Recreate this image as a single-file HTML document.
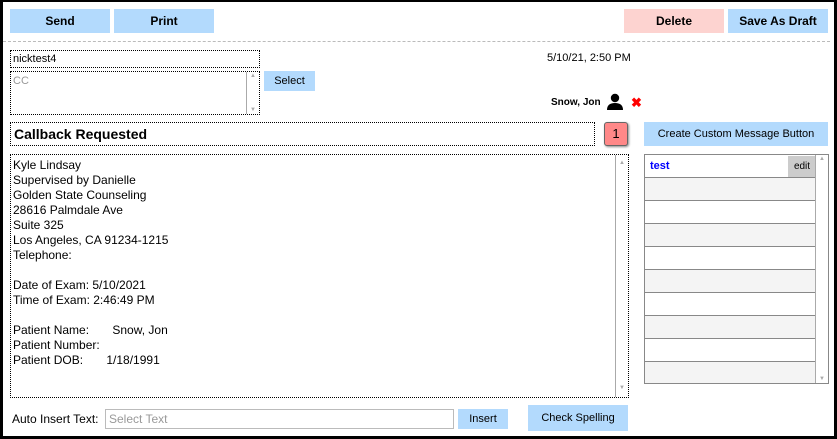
<!DOCTYPE html><html><head><style>
*{margin:0;padding:0;box-sizing:border-box}
body{width:837px;height:439px;background:#000;position:relative;overflow:hidden;font-family:"Liberation Sans",Arial,sans-serif;font-size:12px;color:#000}
#f{position:absolute;left:3px;top:2px;width:831px;height:434px;background:#fff}
.a{position:absolute}
.btn{position:absolute;background:#b3dafd;text-align:center;font-weight:bold;font-size:12px;line-height:24px}
.sb{position:absolute;background:#fff;border-left:1px solid #aaa}
.sb:before{content:"▲";position:absolute;top:1px;left:3px;font-size:6px;color:#aaa}
.sb:after{content:"▼";position:absolute;bottom:1px;left:3px;font-size:6px;color:#aaa}
.dot{border:1px dotted #000}
.row{height:23px;border-bottom:1px solid #888}
</style></head><body><div id="f"></div>
<div class="btn" style="left:10px;top:9px;width:100px">Send</div>
<div class="btn" style="left:114px;top:9px;width:100px">Print</div>
<div class="btn" style="left:624px;top:9px;width:100px;background:#fdd3d0">Delete</div>
<div class="btn" style="left:728px;top:9px;width:100px">Save As Draft</div>
<div class="a" style="left:3px;top:41px;width:827px;border-top:1px dashed #bbb"></div>
<div class="a dot" style="left:10px;top:50px;width:250px;height:18px;padding-left:2px;line-height:16px;font-size:11px">nicktest4</div>
<div class="a dot" style="left:10px;top:71px;width:250px;height:44px;padding:3px 2px;color:#999;font-size:11px">CC
<div class="sb" style="right:0;top:0;width:13px;height:42px"></div></div>
<div class="btn" style="left:264px;top:71px;width:51px;height:20px;line-height:20px;font-weight:normal;font-size:11px">Select</div>
<div class="a" style="left:547px;top:52px;font-size:11px">5/10/21, 2:50 PM</div>
<div class="a" style="left:551px;top:97px;font-size:10px;font-weight:bold">Snow, Jon</div>
<svg class="a" style="left:606px;top:93px" width="18" height="18" viewBox="0 0 18 18"><circle cx="9" cy="5" r="4.2"/><path d="M1 17 Q1 10 9 10 Q17 10 17 17Z"/></svg>
<div class="a" style="left:631px;top:95px;color:#f00;font-weight:bold;font-size:13px">✖</div>
<div class="a dot" style="left:10px;top:122px;width:585px;height:24px;padding-left:3px;line-height:22px;font-size:14px;font-weight:bold">Callback Requested</div>
<div class="a" style="left:604px;top:122px;width:24px;height:24px;background:#f88;border:1px solid #666;border-radius:3px;text-align:center;line-height:22px;font-size:13px;box-shadow:1px 1px 2px #888">1</div>
<div class="btn" style="left:644px;top:122px;width:184px;font-weight:normal;font-size:11px">Create Custom Message Button</div>
<div class="a dot" style="left:10px;top:154px;width:619px;height:244px;padding:3px 2px;line-height:15px">Kyle Lindsay<br>Supervised by Danielle<br>Golden State Counseling<br>28616 Palmdale Ave<br>Suite 325<br>Los Angeles, CA 91234-1215<br>Telephone:<br><br>Date of Exam: 5/10/2021<br>Time of Exam: 2:46:49 PM<br><br>Patient Name:&nbsp;&nbsp;&nbsp;&nbsp;&nbsp;&nbsp; Snow, Jon<br>Patient Number:<br>Patient DOB:&nbsp;&nbsp;&nbsp;&nbsp;&nbsp;&nbsp; 1/18/1991
<div class="sb" style="right:0;top:0;width:13px;height:242px"></div></div>
<div class="a" style="left:644px;top:154px;width:185px;height:230px;border:1px solid #888;background:#fff">
<div class="row" style="position:relative;color:#00f;font-weight:bold;font-size:11px;line-height:22px;padding-left:5px;width:171px">test<span style="position:absolute;right:0;top:1px;width:28px;height:21px;background:#ccc;color:#000;font-weight:normal;font-size:10px;text-align:center;line-height:21px">edit</span></div>
<div class="row" style="background:#f4f4f4;width:171px"></div><div class="row" style="width:171px"></div><div class="row" style="background:#f4f4f4;width:171px"></div><div class="row" style="width:171px"></div><div class="row" style="background:#f4f4f4;width:171px"></div><div class="row" style="width:171px"></div><div class="row" style="background:#f4f4f4;width:171px"></div><div class="row" style="width:171px"></div><div style="background:#f4f4f4;width:171px;height:21px"></div>
<div class="sb" style="right:0;top:0;width:13px;height:228px"></div></div>
<div class="a" style="left:12px;top:412px;font-size:12px">Auto Insert Text:</div>
<div class="a" style="left:105px;top:409px;width:349px;height:20px;border:1px solid #bbb;color:#999;padding-left:3px;line-height:18px">Select Text</div>
<div class="btn" style="left:458px;top:409px;width:50px;height:20px;line-height:20px;font-weight:normal;font-size:11px">Insert</div>
<div class="btn" style="left:528px;top:405px;width:100px;height:26px;line-height:26px;font-weight:normal;font-size:11px">Check Spelling</div>
</body></html>
